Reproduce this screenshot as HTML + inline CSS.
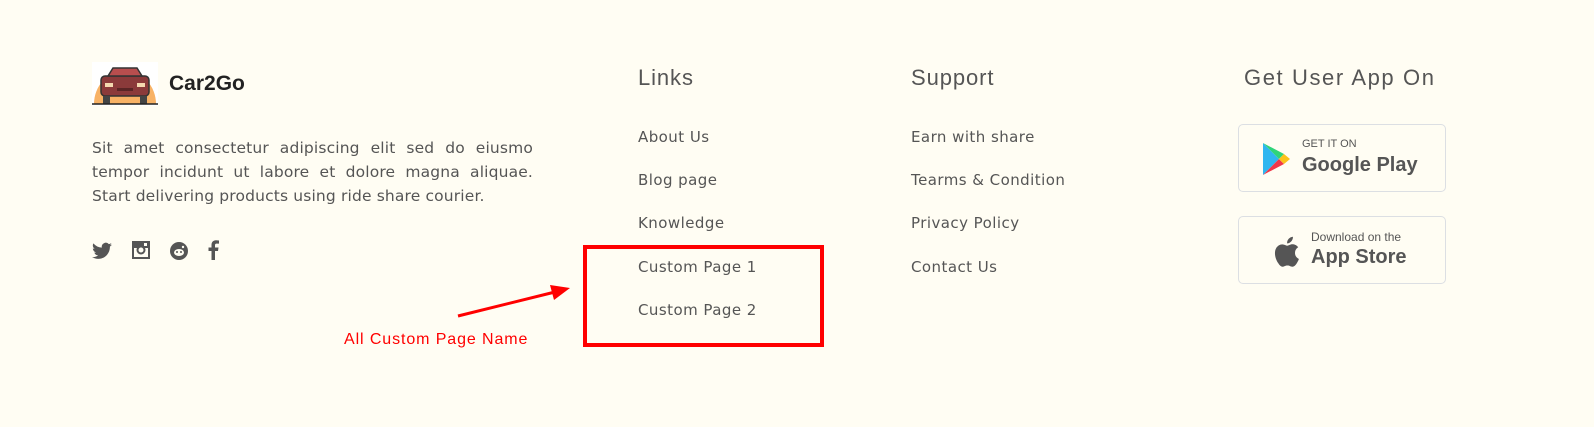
<!DOCTYPE html>
<html><head><style>
body{margin:0;width:1594px;height:427px;background:#fffdf3;font-family:"Liberation Sans",sans-serif;color:#555;position:relative;overflow:hidden}
.a{position:absolute;white-space:nowrap}
.h{font-size:22px;color:#555;letter-spacing:0.9px}
.l{font-size:15px;color:#555;letter-spacing:0.45px;font-family:"DejaVu Sans",sans-serif}
.btn{position:absolute;left:1238px;width:206px;height:66px;border:1px solid #dcdfe3;border-radius:5px}
.p div{text-align:justify;text-align-last:justify;height:24px}
</style></head><body>
<svg class="a" style="left:92px;top:62px" width="66" height="44" viewBox="0 0 66 44">
<rect width="66" height="44" fill="#fff"/>
<path d="M2 42 A31 33 0 0 1 64 42Z" fill="#f8b265"/>
<rect x="9" y="14" width="48" height="20" rx="4" fill="#8b3a3a" stroke="#333" stroke-width="1.5"/>
<path d="M16 14 L21 6 H45 L50 14Z" fill="#b84e4e" stroke="#333" stroke-width="1.5"/>
<rect x="11" y="34" width="7" height="8" fill="#444"/><rect x="48" y="34" width="7" height="8" fill="#444"/>
<rect x="13" y="21" width="8" height="4" fill="#f4d9b0"/><rect x="45" y="21" width="8" height="4" fill="#f4d9b0"/>
<rect x="25" y="26" width="16" height="3" fill="#5a2525"/>
<line x1="0" y1="42" x2="66" y2="42" stroke="#222" stroke-width="1.5"/>
</svg>
<div class="a" style="left:169px;top:72px;font-size:21px;font-weight:bold;color:#222">Car2Go</div>
<div class="a p" style="left:92px;top:136px;width:441px;white-space:normal;font-family:'DejaVu Sans',sans-serif;font-size:15.5px;letter-spacing:0.15px;line-height:24px;color:#555">
<div>Sit amet consectetur adipiscing elit sed do eiusmo</div>
<div>tempor incidunt ut labore et dolore magna aliquae.</div>
<div style="text-align-last:left">Start delivering products using ride share courier.</div>
</div>
<div class="a" style="left:92px;top:240px;font-size:18px;color:#555">
<svg width="20" height="18" viewBox="0 0 24 20"><path fill="#555" d="M24 2.4a10 10 0 0 1-2.8.8A5 5 0 0 0 23.3.5a10 10 0 0 1-3.1 1.2A4.9 4.9 0 0 0 11.8 6 14 14 0 0 1 1.7.9a4.9 4.9 0 0 0 1.5 6.6A4.9 4.9 0 0 1 1 6.9a4.9 4.9 0 0 0 3.9 4.8 5 5 0 0 1-2.2.1 4.9 4.9 0 0 0 4.6 3.4A9.9 9.9 0 0 1 0 17.2 14 14 0 0 0 7.5 19.4c9 0 14-7.5 14-14v-.6A10 10 0 0 0 24 2.4z"/></svg>
<svg style="margin-left:14px" width="20" height="20" viewBox="0 0 20 20"><rect x="1" y="1" width="18" height="18" fill="#555"/><rect x="3" y="8" width="14" height="9" fill="#fffdf3"/><circle cx="10" cy="10" r="4.5" fill="#555"/><circle cx="10" cy="10" r="2.5" fill="#fffdf3"/><rect x="13" y="3" width="3" height="3" fill="#fffdf3"/></svg>
<svg style="margin-left:14px" width="18" height="18" viewBox="0 0 18 18"><circle cx="9" cy="9" r="9" fill="#555"/><ellipse cx="9" cy="10.5" rx="5" ry="3.5" fill="#fffdf3"/><circle cx="7" cy="10" r="1" fill="#555"/><circle cx="11" cy="10" r="1" fill="#555"/><circle cx="13" cy="5" r="1.2" fill="#fffdf3"/></svg>
<svg style="margin-left:14px" width="12" height="20" viewBox="0 0 12 20"><path fill="#555" d="M8 20V11h3l.5-3.5H8V5.3c0-1 .3-1.7 1.8-1.7H12V.5A24 24 0 0 0 9 .3C6.3.3 4.5 2 4.5 5v2.5h-3V11h3v9z"/></svg>
</div>
<div class="a h" style="left:638px;top:65px">Links</div>
<div class="a l" style="left:638px;top:128px">About Us</div>
<div class="a l" style="left:638px;top:171px">Blog page</div>
<div class="a l" style="left:638px;top:214px">Knowledge</div>
<div class="a l" style="left:638px;top:258px">Custom Page 1</div>
<div class="a l" style="left:638px;top:301px">Custom Page 2</div>
<div class="a h" style="left:911px;top:65px">Support</div>
<div class="a l" style="left:911px;top:128px">Earn with share</div>
<div class="a l" style="left:911px;top:171px">Tearms &amp; Condition</div>
<div class="a l" style="left:911px;top:214px">Privacy Policy</div>
<div class="a l" style="left:911px;top:258px">Contact Us</div>
<div class="a h" style="left:1244px;top:65px;letter-spacing:1.6px">Get User App On</div>
<div class="btn" style="top:124px">
<svg class="a" style="left:23px;top:17px" width="30" height="34" viewBox="0 0 30 34"><path d="M1 1 L17 17 L1 33Z" fill="#2fb6f0"/><path d="M1 1 L22 12 L17 17Z" fill="#2fd47a"/><path d="M1 33 L22 22 L17 17Z" fill="#f0384a"/><path d="M22 12 L28 17 L22 22 L17 17Z" fill="#fbc21a"/></svg>
<div class="a" style="left:63px;top:13px;font-size:11px;color:#555">GET IT ON</div>
<div class="a" style="left:63px;top:29px;font-size:20px;font-weight:bold;color:#555">Google Play</div>
</div>
<div class="btn" style="top:216px">
<svg class="a" style="left:32px;top:18px" width="30" height="34" viewBox="0 0 30 34"><path fill="#555" d="M24 18c0-4 3-5.5 3.2-5.7-1.8-2.6-4.5-2.9-5.4-3-2.3-.2-4.5 1.4-5.6 1.4-1.2 0-3-1.3-4.9-1.3-2.5 0-4.8 1.5-6.1 3.7-2.6 4.5-.7 11.2 1.9 14.9 1.2 1.8 2.7 3.8 4.6 3.7 1.8-.1 2.5-1.2 4.8-1.2s2.9 1.2 4.9 1.2c2 0 3.3-1.8 4.5-3.6 1.4-2.1 2-4.1 2-4.2-.1 0-3.900-1.5-3.9-5.9zM20.4 6.3c1-1.2 1.7-2.9 1.5-4.6-1.5.1-3.3 1-4.3 2.2-.9 1.1-1.7 2.8-1.5 4.5 1.6.1 3.3-.9 4.3-2.1z"/></svg>
<div class="a" style="left:72px;top:13px;font-size:12px;color:#555">Download on the</div>
<div class="a" style="left:72px;top:29px;font-size:20px;font-weight:bold;color:#555">App Store</div>
</div>
<div class="a" style="left:583px;top:245px;width:233px;height:94px;border:4px solid #f00"></div>
<svg class="a" style="left:450px;top:280px" width="130" height="45"><line x1="8" y1="36" x2="105" y2="12" stroke="#f00" stroke-width="3"/><path d="M120 8 L100 5 L104 20Z" fill="#f00"/></svg>
<div class="a" style="left:344px;top:331px;font-size:16px;color:#f00;letter-spacing:0.9px">All Custom Page Name</div>
</body></html>
